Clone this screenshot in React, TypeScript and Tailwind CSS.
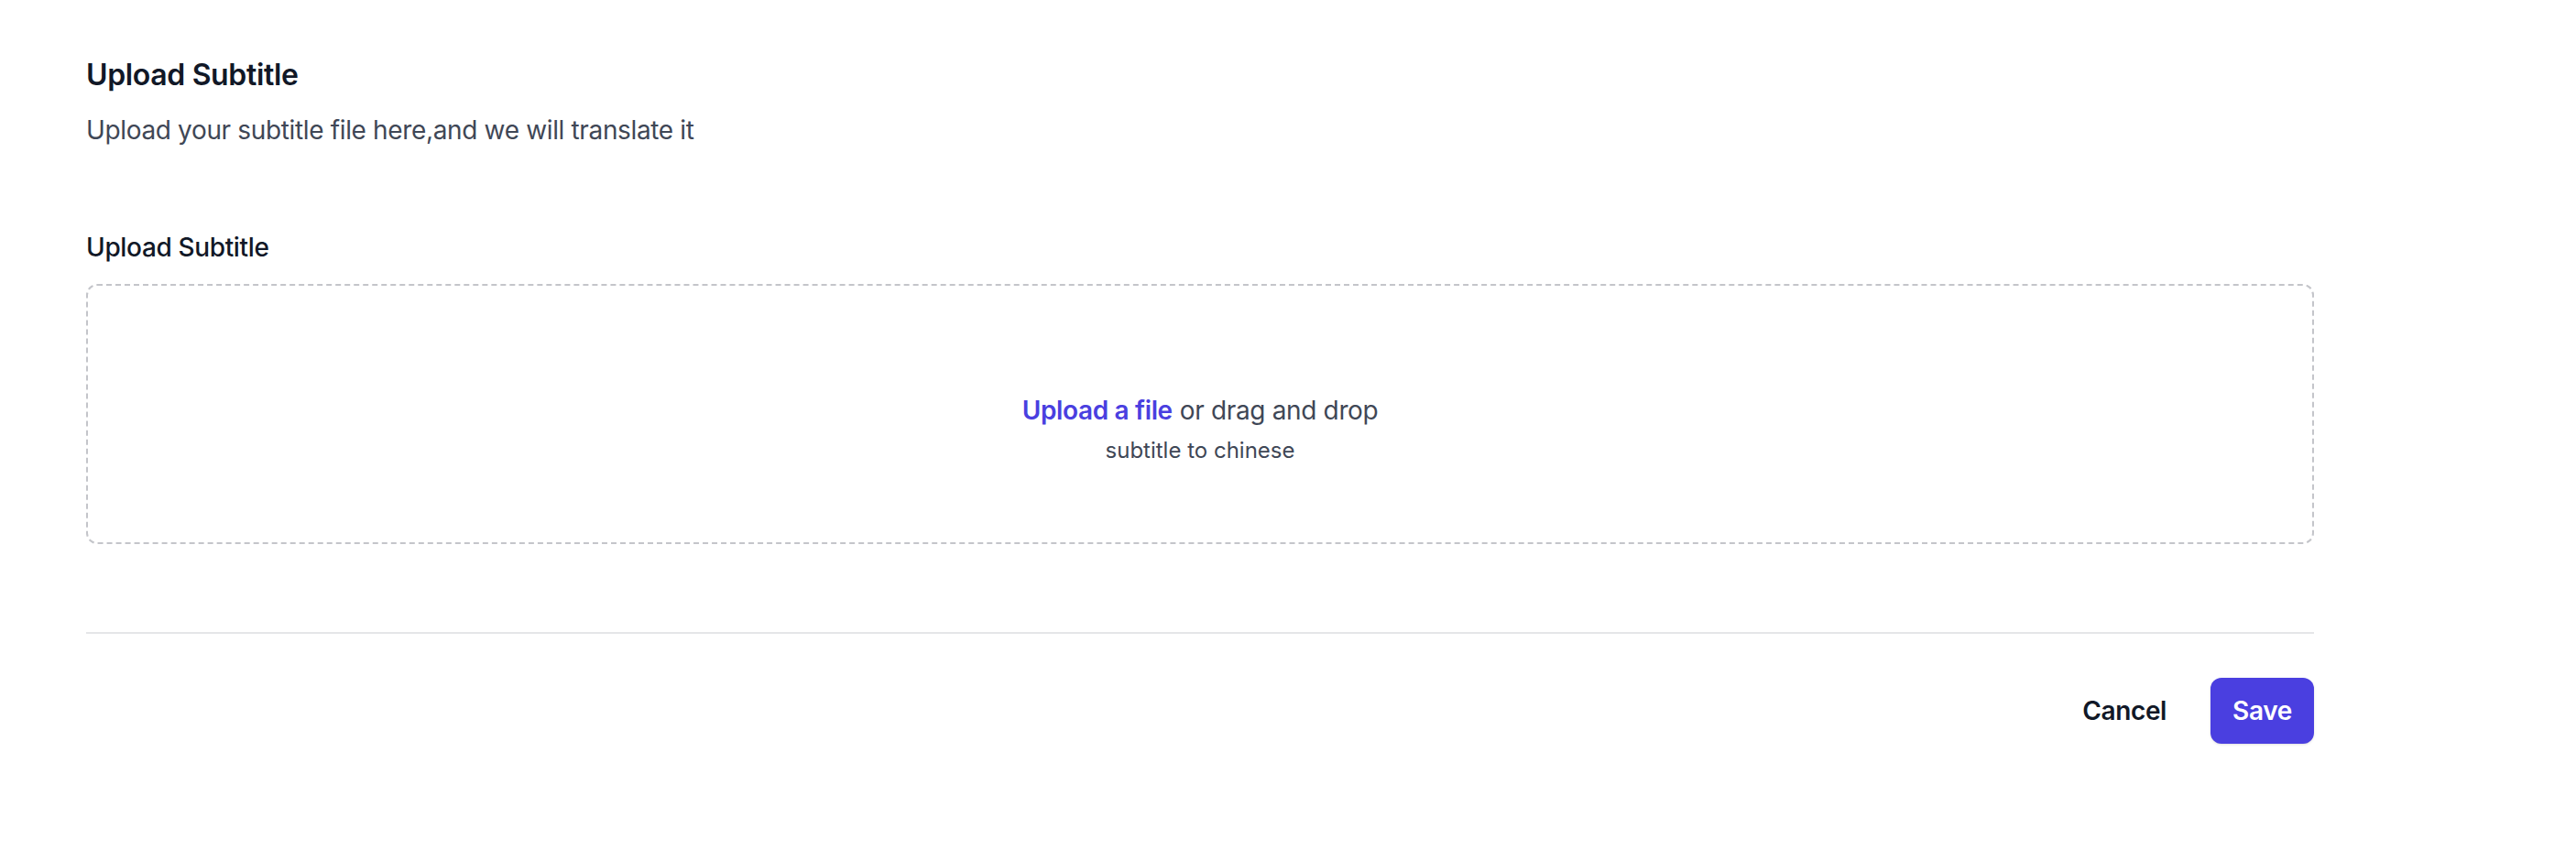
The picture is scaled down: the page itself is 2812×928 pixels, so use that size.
export default function App() {
  return (
    <div
      className="min-h-screen bg-white pl-[94px] pt-[54px] tracking-[-0.35px]"
      style={{ fontFamily: 'Inter, "Noto Sans", sans-serif' }}
    >
      <form className="w-[2432px]">
        {/* Header + dropzone */}
        <div className="border-b-2 border-[#e5e6e8] pb-[96px]">
          <h2 className="text-[32px] leading-[56px] font-semibold text-[#111827]">Upload Subtitle</h2>
          <p className="mt-[8px] text-[28px] leading-[48px] text-[#3f4756]">
            Upload your subtitle file here,and we will translate it
          </p>

          <div className="mt-[80px]">
            <label className="block text-[28px] leading-[48px] font-medium text-[#111827]">
              Upload Subtitle
            </label>
            <div className="mt-[16px] flex justify-center rounded-[12px] border-2 border-dashed border-[#c4c5ca] px-[48px] py-[80px]">
              <div className="text-center">
                <div className="mt-[32px] flex text-[28px] leading-[48px] text-[#3f4756]">
                  <span className="font-semibold text-[#4a3fe0] cursor-pointer">Upload a file</span>
                  <span className="pl-[8px]">or drag and drop</span>
                </div>
                <p className="text-[24px] leading-[40px] tracking-normal text-[#3f4756]">subtitle to chinese</p>
              </div>
            </div>
          </div>
        </div>

        {/* Actions */}
        <div className="mt-[48px] flex items-center justify-end gap-x-[48px]">
          <button type="button" className="text-[28px] leading-[48px] font-semibold text-[#111827]">
            Cancel
          </button>
          <button
            type="button"
            className="rounded-[12px] bg-[#4a3fe0] px-[24px] py-[16px] text-[28px] leading-[40px] font-semibold text-white shadow-sm"
          >
            Save
          </button>
        </div>
      </form>
    </div>
  )
}
